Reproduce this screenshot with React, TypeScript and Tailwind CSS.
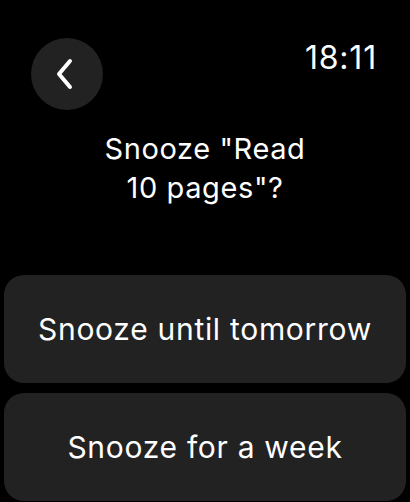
export default function App() {
  return (
    <div className="w-[410px] h-[502px] bg-black text-white overflow-hidden flex flex-col font-['Inter','Liberation_Sans',sans-serif]">
      <div className="flex items-start justify-between pt-[38px] pl-[31px] pr-[33px]">
        <button className="w-[72px] h-[72px] rounded-full bg-[#222222] flex items-center justify-center">
          <svg width="22" height="32" viewBox="0 0 22 32" className="-ml-[3px]">
            <path
              d="M15 3 L4 16 L15 29"
              fill="none"
              stroke="white"
              strokeWidth="4"
              strokeLinecap="round"
              strokeLinejoin="round"
            />
          </svg>
        </button>
        <span className="text-[32px] leading-none mt-[4px] tracking-[0.8px]">18:11</span>
      </div>

      <div className="text-center text-[29px] leading-[39px] mt-[19px] tracking-[0.6px]">
        Snooze "Read
        <br />
        10 pages"?
      </div>

      <div className="flex flex-col gap-[10px] px-[4px] mt-[68px]">
        <button className="h-[108px] shrink-0 rounded-[20px] bg-[#222223] text-[30px] tracking-[0.7px]">
          Snooze until tomorrow
        </button>
        <button className="h-[108px] shrink-0 rounded-[20px] bg-[#222223] text-[30px] tracking-[0.7px]">
          Snooze for a week
        </button>
      </div>
    </div>
  );
}
